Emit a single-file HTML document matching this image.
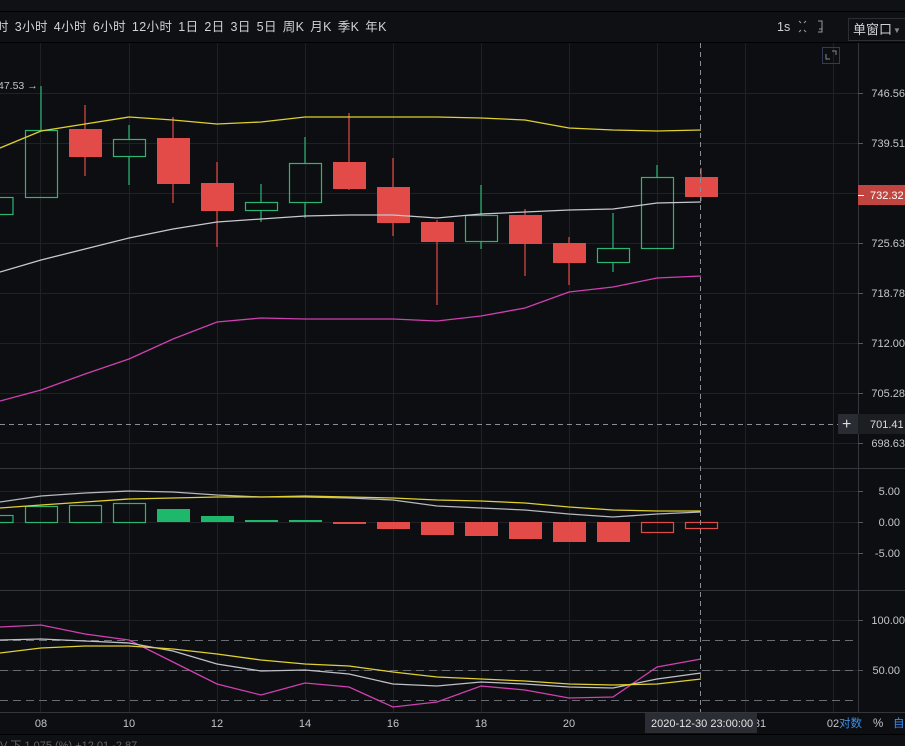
<!DOCTYPE html><html><head><meta charset="utf-8"><style>
body{margin:0;width:905px;height:746px;overflow:hidden;background:#0d0e11;font-family:"Liberation Sans","Noto Sans CJK SC",sans-serif}
svg{position:absolute;left:0;top:0}
</style></head><body>
<svg width="905" height="746" xmlns="http://www.w3.org/2000/svg" font-family="Liberation Sans, Noto Sans CJK SC, sans-serif">
<rect x="0" y="0" width="905" height="746" fill="#0d0e11"/>
<rect x="0" y="0" width="905" height="11" fill="#101115"/>
<line x1="0" y1="11.5" x2="905" y2="11.5" stroke="#000"/>
<rect x="0" y="12" width="905" height="30" fill="#0f1014"/>
<line x1="0" y1="42.5" x2="905" y2="42.5" stroke="#000"/>
<text x="-4" y="31" font-size="12.5" fill="#d0d2d6" letter-spacing="0.4" word-spacing="2">时 3小时 4小时 6小时 12小时 1日 2日 3日 5日 周K 月K 季K 年K</text>
<text x="777" y="31" font-size="12.5" fill="#d0d2d6">1s</text>
<g stroke="#999" stroke-width="1" fill="none"><path d="M799 21l2 2M806 21l-2 2M799 32l2-2M806 32l-2-2"/><path d="M818 21h4v11h-4M822 29h-3"/></g>
<rect x="848.5" y="18.5" width="60" height="22" fill="none" stroke="#2c2e34"/>
<text x="853" y="34" font-size="13" fill="#d0d2d6">单窗口</text><text x="893" y="33" font-size="8" fill="#888">▼</text>
<g stroke="#1f2125" stroke-width="1">
<path d="M40.5 43V712M129.5 43V712M217.5 43V712M305.5 43V712M393.5 43V712M481.5 43V712M569.5 43V712M657.5 43V712M745.5 43V712M833.5 43V712"/>
<path d="M0 93.5H858M0 143.5H858M0 193.5H858M0 243.5H858M0 293.5H858M0 343.5H858M0 393.5H858M0 443.5H858M0 491.5H858M0 522.5H858M0 553.5H858M0 620.5H858M0 670.5H858"/>
</g>
<g stroke="#34363c"><path d="M0 468.5H905M0 590.5H905M0 712.5H905M858.5 43V712"/></g>
<g stroke="#55575c"><path d="M858 93.5h5M858 143.5h5M858 243.5h5M858 293.5h5M858 343.5h5M858 393.5h5M858 443.5h5M858 491.5h5M858 522.5h5M858 553.5h5M858 620.5h5M858 670.5h5"/></g>
<g font-size="11" fill="#c4c6ca" text-anchor="end">
<text x="905" y="97">746.56</text><text x="905" y="147">739.51</text><text x="905" y="247">725.63</text><text x="905" y="297">718.78</text><text x="905" y="347">712.00</text><text x="905" y="397">705.28</text><text x="905" y="447">698.63</text>
<text x="900" y="495">5.00</text><text x="900" y="526">0.00</text><text x="900" y="557">-5.00</text>
<text x="905" y="624">100.00</text><text x="900" y="674">50.00</text>
</g>
<rect x="858" y="185" width="47" height="20" fill="#c0443f"/><path d="M858 195.5h6" stroke="#fff"/>
<text x="870" y="199" font-size="11" fill="#fff">732.32</text>
<rect x="838" y="414" width="20" height="20" fill="#2a2c33"/><text x="842" y="429" font-size="16" fill="#ddd">+</text>
<rect x="858" y="414" width="47" height="20" fill="#1c1e22"/><text x="870" y="428" font-size="11" fill="#ddd">701.41</text>
<rect x="822.5" y="47.5" width="17" height="16" fill="none" stroke="#333a55"/><path d="M826 54v5h4M832 51h4v4" stroke="#888" fill="none"/>
<text x="-2" y="89" font-size="10.5" fill="#c4c6ca">47.53 →</text>
<g stroke="#2bb673" fill="none" stroke-width="1.2">
<rect x="-20" y="197.5" width="33" height="17"/><path d="M41 86V130M129 125V139M129 156V185M261 184V202M261 210V222M305 137V163M305 202V218M481 185V215M481 241V249M613 213V248M613 262V272M657 165V177"/>
<rect x="25.5" y="130.5" width="32" height="67"/><rect x="113.5" y="139.5" width="32" height="17"/><rect x="245.5" y="202.5" width="32" height="8"/><rect x="289.5" y="163.5" width="32" height="39"/><rect x="465.5" y="215.5" width="32" height="26"/><rect x="597.5" y="248.5" width="32" height="14"/><rect x="641.5" y="177.5" width="32" height="71"/>
</g>
<g stroke="#e24b47" stroke-width="1.2"><path d="M85 105V176M173 117V203M217 162V247M349 113V190M393 158V236M437 220V305M525 209V276M569 237V285M701 168V201"/></g>
<g fill="#e24b47">
<rect x="69" y="129" width="33" height="28"/><rect x="157" y="138" width="33" height="46"/><rect x="201" y="183" width="33" height="28"/><rect x="333" y="162" width="33" height="27"/><rect x="377" y="187" width="33" height="36"/><rect x="421" y="222" width="33" height="20"/><rect x="509" y="215" width="33" height="29"/><rect x="553" y="243" width="33" height="20"/><rect x="685" y="177" width="33" height="20"/>
</g>
<g fill="none" stroke-width="1.3">
<polyline stroke="#e0d030" points="0,148 41,131 85,124 129,117 173,120 217,124 261,122 305,117 349,117 393,117 437,117 481,118 525,120 569,128 613,130 657,131 701,130"/>
<polyline stroke="#c8c8d0" points="0,272 41,260 85,249 129,238 173,229 217,222 261,219 305,216 349,215 393,215 437,218 481,214 525,212 569,210 613,209 657,203 701,202"/>
<polyline stroke="#d040b0" points="0,401 41,390 85,374 129,359 173,339 217,322 261,318 305,319 349,319 393,319 437,321 481,316 525,308 569,292 613,287 657,278 701,276"/>
</g>
<g stroke="#2bb673" fill="none" stroke-width="1.2"><rect x="-20" y="515.5" width="33" height="7"/><rect x="25.5" y="506.5" width="32" height="16"/><rect x="69.5" y="505.5" width="32" height="17"/><rect x="113.5" y="503.5" width="32" height="19"/></g>
<g fill="#1db86a"><rect x="157" y="509" width="33" height="13"/><rect x="201" y="516" width="33" height="6"/><rect x="245" y="520" width="33" height="2"/><rect x="289" y="520" width="33" height="2"/></g>
<g fill="#e24b47"><rect x="333" y="522" width="33" height="2"/><rect x="377" y="522" width="33" height="7"/><rect x="421" y="522" width="33" height="13"/><rect x="465" y="522" width="33" height="14"/><rect x="509" y="522" width="33" height="17"/><rect x="553" y="522" width="33" height="20"/><rect x="597" y="522" width="33" height="20"/></g>
<g stroke="#e24b47" fill="none" stroke-width="1.2"><rect x="641.5" y="522.5" width="32" height="10"/><rect x="685.5" y="522.5" width="32" height="6"/></g>
<g fill="none" stroke-width="1.3">
<polyline stroke="#b8b8c0" points="0,502 41,496 85,493 129,491 173,492 217,495 261,497 305,497 349,498 393,500 437,506 481,508 525,510 569,514 613,517 657,514 701,512"/>
<polyline stroke="#e0d030" points="0,508 41,505 85,502 129,499 173,498 217,497 261,497 305,496 349,497 393,498 437,500 481,501 525,503 569,507 613,510 657,511 701,511"/>
</g>
<g stroke="#6a6c72" stroke-dasharray="8,5"><path d="M0 640.5H858M0 670.5H858M0 700.5H858"/></g>
<g fill="none" stroke-width="1.3">
<polyline stroke="#d040b0" points="0,627 41,625 85,634 129,640 173,662 217,684 261,695 305,683 349,687 393,707 437,702 481,686 525,690 569,698 613,697 657,667 701,659"/>
<polyline stroke="#c0c0c8" points="0,640 41,639 85,641 129,643 173,651 217,664 261,671 305,670 349,674 393,684 437,686 481,682 525,684 569,687 613,688 657,679 701,673"/>
<polyline stroke="#e0d030" points="0,653 41,648 85,646 129,646 173,649 217,654 261,660 305,664 349,666 393,672 437,677 481,679 525,681 569,684 613,685 657,684 701,679"/>
</g>
<g stroke="#8a8d95" stroke-dasharray="5,4"><path d="M700.5 43V712M0 424.5H838"/></g>
<g font-size="11" fill="#c4c6ca" text-anchor="middle"><text x="41" y="727">08</text><text x="129" y="727">10</text><text x="217" y="727">12</text><text x="305" y="727">14</text><text x="393" y="727">16</text><text x="481" y="727">18</text><text x="569" y="727">20</text><text x="833" y="727">02</text><text x="760" y="727">31</text></g>
<rect x="645" y="713" width="112" height="20" fill="#2a2d33"/><text x="651" y="727" font-size="11" fill="#e6e6e6">2020-12-30 23:00:00</text>
<text x="839" y="727" font-size="11.5" fill="#3b8eea">对数</text><text x="873" y="727" font-size="11.5" fill="#c4c6ca">%</text><text x="893" y="727" font-size="11.5" fill="#3b8eea">自</text>
<line x1="0" y1="734.5" x2="905" y2="734.5" stroke="#000"/>
<rect x="0" y="735" width="905" height="11" fill="#0f1014"/>
<text x="0" y="749" font-size="11" fill="#666">V 下 1.075 (%)   +12.01   -2.87</text>
</svg>
</body></html>
